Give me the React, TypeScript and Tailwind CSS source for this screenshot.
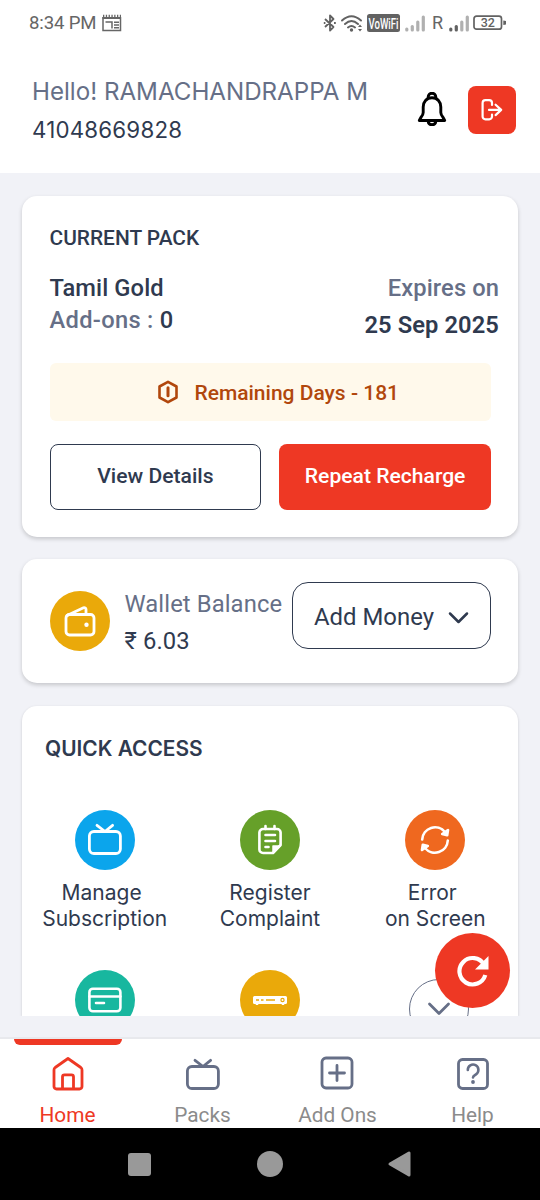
import type { ReactNode } from "react";

type QuickItem = {
  lines: string[];
  color: string;
  icon: ReactNode;
  shift: string;
};

function TvIcon({ color }: { color: string }) {
  return (
    <svg width="36" height="34" viewBox="0 0 36 34" fill="none" stroke={color} strokeWidth="2.8" strokeLinecap="round" strokeLinejoin="round">
      <rect x="2.4" y="8.5" width="31" height="22" rx="4.5" />
      <path d="M10 2.3 18 8.5l7.6-6.2" />
    </svg>
  );
}

function ComplaintIcon() {
  return (
    <svg width="26" height="32" viewBox="0 0 26 32" fill="none" stroke="#fff" strokeWidth="2.6" strokeLinecap="round" strokeLinejoin="round">
      <path d="M6 5h14a3.6 3.6 0 0 1 3.6 3.6V21L16 29H6a3.6 3.6 0 0 1-3.6-3.6V8.6A3.6 3.6 0 0 1 6 5Z" />
      <path d="M8.5 2v3M17.5 2v3M8.5 11h9.5M8.5 17h9.5M8.5 23h3" />
      <path d="M16 28v-6h7Z" fill="#fff" strokeWidth="1.5" />
    </svg>
  );
}

function SyncIcon() {
  return (
    <svg width="32" height="32" viewBox="0 0 32 32" fill="none" stroke="#fff" strokeWidth="2.6" strokeLinecap="round" strokeLinejoin="round">
      <path d="M3.2 15.5A12.9 12.9 0 0 1 26 8" />
      <path d="M28.8 16.5A12.9 12.9 0 0 1 6 24" />
      <path d="m29 6-.8 5.300-5-1.300Z" fill="#fff" />
      <path d="m3 26 .8-5.300 5 1.300Z" fill="#fff" />
    </svg>
  );
}

function CardIcon() {
  return (
    <svg width="36" height="28" viewBox="0 0 36 28" fill="none" stroke="#fff" strokeWidth="2.6" strokeLinecap="round">
      <rect x="2.4" y="2.7" width="31" height="22.6" rx="3.5" />
      <path d="M2.4 10.5h31M9 17h8" />
    </svg>
  );
}

function SetTopBoxIcon() {
  return (
    <svg width="36" height="12" viewBox="0 0 36 12">
      <rect x="1" y="2" width="34" height="8" rx="1.5" fill="#fff" />
      <path d="M5 10v1M31 10v1" stroke="#fff" strokeWidth="2.5" />
      <path d="M4 6h3M9 6h2.500M14 6h9" stroke="#eaa90a" strokeWidth="1.5" />
      <circle cx="30.5" cy="6" r="1.6" fill="none" stroke="#eaa90a" strokeWidth="1.2" />
    </svg>
  );
}

function WalletIcon() {
  return (
    <svg width="34" height="34" viewBox="0 0 34 34" fill="none" stroke="#fff" strokeWidth="2.8" strokeLinecap="round" strokeLinejoin="round">
      <rect x="3" y="10.5" width="28" height="20.5" rx="3.5" />
      <path d="M4 11.500 20.500 3.700a1.800 1.800 0 0 1 2.500 1.600v5" />
      <circle cx="23.5" cy="20.7" r="2.2" fill="#fff" stroke="none" />
    </svg>
  );
}

function Signal({ active }: { active: number }) {
  const heights = [4, 6.5, 11, 16];
  return (
    <svg width="21" height="17" viewBox="0 0 21 17">
      {heights.map((h, i) => (
        <rect key={h} x={i * 5.5 + 0.2} y={16.5 - h} width="3.2" height={h} rx="1.5" fill={i < active ? "#626262" : "#b0b0b0"} />
      ))}
    </svg>
  );
}

function StatusBar() {
  return (
    <div className="flex h-[46px] items-center pl-[29px] text-[#666]">
      <span className="w-[73px] pt-0.5 text-[18.6px] tracking-[-0.15px] whitespace-nowrap">8:34 PM</span>
      <svg width="20" height="18" viewBox="0 0 20 18" fill="none" stroke="#666" strokeWidth="1.5">
        <path d="M1 3v13.500h17.500V3M3.500 8h6.500v6.500M12 8.200h5M12 11h5M12 13.800h5" />
        <path d="M.5 4h18.500" strokeWidth="2" />
        <path d="M1 1.800h18" strokeWidth="2.200" strokeDasharray="1.300 1.500" />
      </svg>
      <div className="ml-[201px] flex items-center">
        <svg width="14" height="20" viewBox="0 0 14 20" fill="none" stroke="#626262" strokeWidth="1.8" strokeLinejoin="round">
          <path d="m2 6 8.500 8L7 17.500V2.500L10.500 6 2 14" />
          <path d="M.8 10h1.600M11 10h1.800" />
        </svg>
        <svg width="23" height="19" viewBox="0 0 23 19" className="ml-1" fill="none" stroke="#626262" strokeWidth="1.9" strokeLinecap="round">
          <path d="M1 6.500Q10.500-2 20 6.500M4 10Q10.500 4 17 10M7 13.500Q10.500 10.500 14 13.500" />
          <circle cx="10.5" cy="16" r="1.7" fill="#626262" stroke="none" />
          <path d="m17 13 2-2.500 2 2.500ZM17 15l2 2.500 2-2.500Z" fill="#626262" stroke="none" />
        </svg>
        <svg width="33" height="18" viewBox="0 0 33 18" className="ml-[3px] overflow-visible">
          <rect width="33" height="18" rx="2.5" fill="#626262" />
          <text x="1.5" y="14.5" textLength="30" lengthAdjust="spacingAndGlyphs" fontSize="14" fontWeight="500" fill="#fff">
            VoWiFi
          </text>
        </svg>
        <span className="ml-[5px]"><Signal active={0} /></span>
        <span className="ml-1.5 w-[17px] text-[18px] leading-5">R</span>
        <Signal active={2} />
        <svg width="34" height="16" viewBox="0 0 34 16" className="ml-[3px]">
          <rect x="1" y="1.2" width="27.5" height="13" rx="2.5" fill="none" stroke="#626262" strokeWidth="1.7" />
          <path d="M30.300 5.500 33 6v3.500l-2.700.5Z" fill="#626262" />
          <text x="14.8" y="12" textAnchor="middle" fontSize="12.5" fontWeight="500" fill="#626262">
            32
          </text>
        </svg>
      </div>
    </div>
  );
}

function Header() {
  return (
    <header className="flex h-[127px] justify-between pt-7 pr-6 pl-8 font-[Inter,sans-serif]">
      <div className="whitespace-nowrap">
        <p className="text-[24.15px] leading-9 text-[#666f87]">Hello! RAMACHANDRAPPA M</p>
        <p className="text-[22.3px] leading-10 tracking-[0.2px] text-[#2f3a4f]">41048669828</p>
      </div>
      <div className="mt-[11.5px] flex h-12 items-center gap-[21px]">
        <svg width="30" height="36" viewBox="0 0 30 36" fill="none" stroke="#000" strokeWidth="2.9" strokeLinejoin="round" strokeLinecap="round">
          <path d="M11.200 6V5a3.800 3.800 0 0 1 7.600 0v1" />
          <path d="M15 5.800c-5.500 0-8.800 4.200-8.800 9.200v5.500c0 2-.8 3.200-2.300 5L2.300 28.500h25.400l-1.600-3c-1.500-1.800-2.300-3-2.300-5V15c0-5-3.300-9.200-8.800-9.200Z" />
          <path d="M11.200 29.500c.5 4.200 7.100 4.200 7.600 0" />
        </svg>
        <button type="button" className="flex size-12 items-center justify-center rounded-lg bg-[#ee3824]">
          <svg width="24" height="24" viewBox="0 0 24 24" fill="none" stroke="#fff" strokeWidth="2.2" strokeLinecap="round" strokeLinejoin="round">
            <path d="M12 7V5a2.800 2.800 0 0 0-2.800-2.800H5.400A2.800 2.800 0 0 0 2.600 5v13.600a2.800 2.800 0 0 0 2.800 2.800h3.800a2.800 2.800 0 0 0 2.800-2.800v-2" />
            <path d="M9 11.900h12M15.600 6.700l5.600 5.200-5.600 5.200" />
          </svg>
        </button>
      </div>
    </header>
  );
}

function PackCard() {
  return (
    <section className="h-[341px] rounded-[15px] bg-white pt-7 pr-[27px] pl-[27.5px] shadow-[0_2px_4px_rgba(0,0,0,0.18)]">
      <h2 className="text-[20.9px] leading-[29px] font-medium whitespace-nowrap">CURRENT PACK</h2>
      <div className="mt-[19px] -mr-2 flex justify-between text-[23.7px] leading-8 font-medium tracking-[0.1px]">
        <div>
          <p>Tamil Gold</p>
          <p className="leading-[33px]">
            <span className="tracking-[0.3px] text-[#666f87]">Add-ons : </span>0
          </p>
        </div>
        <div className="text-right">
          <p className="text-[#666f87]">Expires on</p>
          <p className="leading-[42px] font-semibold">25 Sep 2025</p>
        </div>
      </div>
      <div className="mt-[17px] flex h-[58px] items-center justify-center gap-[15px] rounded-md bg-[#fff9eb] pt-[3px] pl-4 text-[21px] font-medium text-[#b1470c]">
        <svg width="22" height="24" viewBox="0 0 22 24" className="-mt-1" fill="none" stroke="#b1470c" strokeWidth="2.6" strokeLinejoin="round" strokeLinecap="round">
          <path d="M11 1.800 19.500 6.500v11L11 22.200l-8.500-4.700v-11Z" />
          <path d="M11 7.800v8" strokeWidth="3" />
        </svg>
        <span>Remaining Days - 181</span>
      </div>
      <div className="mt-[23px] grid h-[66px] grid-cols-2 gap-[18px] text-[21.1px] font-medium">
        <button type="button" className="rounded-lg border-[1.5px] border-[#2f3a4f] pb-0.5">View Details</button>
        <button type="button" className="rounded-lg bg-[#ee3824] pb-0.5 text-white">Repeat Recharge</button>
      </div>
    </section>
  );
}

function WalletCard() {
  return (
    <section className="mt-[22px] flex h-[124px] rounded-[15px] bg-white pr-[27px] pl-[27.5px] shadow-[0_2px_4px_rgba(0,0,0,0.18)]">
      <div className="mt-8 flex size-[60px] shrink-0 items-center justify-center rounded-full bg-[#eaa90a]">
        <WalletIcon />
      </div>
      <div className="ml-[15px] pt-[27px] text-[23.8px] tracking-[0.1px] whitespace-nowrap">
        <p className="leading-9 text-[#666f87]">Wallet Balance</p>
        <p className="leading-[38px]">₹ 6.03</p>
      </div>
      <button type="button" className="mt-[23px] ml-auto flex h-[67px] w-[199px] shrink-0 items-center justify-center gap-[14px] rounded-2xl border-[1.5px] border-[#2f3a4f] pt-1 text-[23.9px]">
        <span>Add Money</span>
        <svg width="21" height="14" viewBox="0 0 21 14" fill="none" stroke="#2f3a4f" strokeWidth="2.5" strokeLinecap="round" strokeLinejoin="round">
          <path d="m2 2.500 8.500 8.500L19 2.500" />
        </svg>
      </button>
    </section>
  );
}

const QUICK_ITEMS: QuickItem[] = [
  { lines: ["Manage", "Subscription"], color: "bg-[#0ba5ec]", icon: <TvIcon color="#fff" />, shift: "pr-1.5" },
  { lines: ["Register", "Complaint"], color: "bg-[#66a029]", icon: <ComplaintIcon />, shift: "" },
  { lines: ["Error", "on Screen"], color: "bg-[#ef681f]", icon: <SyncIcon />, shift: "pr-1.5" },
];

function QuickAccess() {
  return (
    <section className="relative mt-[23px] h-[310px]">
      <div className="h-full overflow-hidden rounded-t-[15px] bg-white pt-7 shadow-[0_1px_3px_rgba(0,0,0,0.16)] [clip-path:inset(-4px_-4px_0_-4px)]">
        <h2 className="pl-[23px] font-[Inter,sans-serif] text-[20.9px] leading-[30px] font-semibold">QUICK ACCESS</h2>
        <div className="mt-[45.5px] grid grid-cols-3 font-[Inter,sans-serif] text-[21px] leading-[26px]">
          {QUICK_ITEMS.map((item) => (
            <div key={item.lines[0]} className="flex flex-col items-center whitespace-nowrap">
              <div className={`flex size-[60px] items-center justify-center rounded-full ${item.color}`}>{item.icon}</div>
              <p className={`mt-2.5 ${item.shift}`}>{item.lines[0]}</p>
              <p>{item.lines[1]}</p>
            </div>
          ))}
        </div>
        <div className="mt-[38.5px] grid grid-cols-3 justify-items-center">
          <div className="flex size-[60px] items-center justify-center rounded-full bg-[#18b79f]">
            <CardIcon />
          </div>
          <div className="flex size-[60px] items-center justify-center rounded-full bg-[#eaa90a]">
            <SetTopBoxIcon />
          </div>
          <div className="mt-[9px] ml-2 flex size-[60px] items-center justify-center rounded-full border-[1.5px] border-[#666f87]">
            <svg width="24" height="15" viewBox="0 0 24 15" fill="none" stroke="#666f87" strokeWidth="2.8" strokeLinecap="round" strokeLinejoin="round">
              <path d="m2.500 2 9.500 9.500L21.500 2" />
            </svg>
          </div>
        </div>
      </div>
      {/* Floating refresh button */}
      <button type="button" className="absolute right-2 bottom-2 flex size-[75px] items-center justify-center rounded-full bg-[#ee3824]">
        <svg width="32" height="32" viewBox="0 0 32 32" fill="none" stroke="#fff" strokeWidth="4.2">
          <path d="M27 9.500A13.200 13.200 0 1 0 28.300 20" />
          <path d="M31.500 1v13.500H18Z" fill="#fff" stroke="none" />
        </svg>
      </button>
    </section>
  );
}

const TABS = [
  {
    label: "Home",
    icon: (
      <svg width="34" height="36" viewBox="0 0 34 36" fill="none" stroke="#ee3824" strokeWidth="2.8" strokeLinejoin="round">
        <path d="M17 2.500 29.800 11.500a3 3 0 0 1 1.200 2.500v16.500a2.500 2.500 0 0 1-2.500 2.500h-23A2.500 2.500 0 0 1 3 30.500V14a3 3 0 0 1 1.200-2.500Z" />
        <path d="M11.500 33V20.800a2 2 0 0 1 2-2h7a2 2 0 0 1 2 2V33" />
      </svg>
    ),
  },
  { label: "Packs", icon: <TvIcon color="#666f87" /> },
  {
    label: "Add Ons",
    icon: (
      <svg width="34" height="36" viewBox="0 0 34 36" className="mr-0.5" fill="none" stroke="#666f87" strokeWidth="2.8" strokeLinecap="round">
        <rect x="2" y="2" width="30" height="30" rx="4" />
        <path d="M17 9.500v15M9.500 17h15" />
      </svg>
    ),
  },
  {
    label: "Help",
    icon: (
      <svg width="34" height="36" viewBox="0 0 34 36" fill="none" stroke="#666f87" strokeWidth="2.8" strokeLinecap="round" strokeLinejoin="round">
        <rect x="2.5" y="3.5" width="29" height="29" rx="4" />
        <path d="M11.800 14a5.300 5.300 0 1 1 8.200 4.300c-2 1.300-3 1.700-3 3.200" strokeWidth="2.6" />
        <circle cx="17" cy="26" r="1.9" fill="#666f87" stroke="none" />
      </svg>
    ),
  },
];

function BottomTabs() {
  return (
    <nav className="grid h-[91px] grid-cols-4 border-t-2 border-[#e8e9ed] bg-white text-[20.8px] leading-6">
      {TABS.map((tab, i) => (
        <div key={tab.label} className={`flex flex-col items-center whitespace-nowrap ${i === 0 ? "text-[#ee3824]" : "text-[#8b8b8b]"}`}>
          <div className={`h-[5.5px] w-[108px] rounded-b-md ${i === 0 ? "bg-[#ee3824]" : ""}`} />
          <div className="mt-[11.5px] flex h-9 items-end">{tab.icon}</div>
          <span className="mt-[11px]">{tab.label}</span>
        </div>
      ))}
    </nav>
  );
}

export default function App() {
  return (
    <div className="flex h-[1200px] w-[540px] flex-col overflow-hidden bg-white font-[Roboto,sans-serif] text-[#2f3a4f]">
      <StatusBar />
      <Header />
      <main className="h-[864px] bg-[#f1f2f7] px-[22px] pt-[23px]">
        <PackCard />
        <WalletCard />
        <QuickAccess />
      </main>
      <BottomTabs />
      <div className="flex h-[72px] items-center bg-black pl-[128px]">
        <div className="size-[23px] rounded-[3px] bg-[#999]" />
        <div className="ml-[106px] size-[26px] rounded-full bg-[#999]" />
        <svg width="25" height="28" viewBox="0 0 25 28" className="ml-[104px]">
          <path d="M3 14 22 3v22Z" fill="#999" stroke="#999" strokeWidth="3" strokeLinejoin="round" />
        </svg>
      </div>
    </div>
  );
}
